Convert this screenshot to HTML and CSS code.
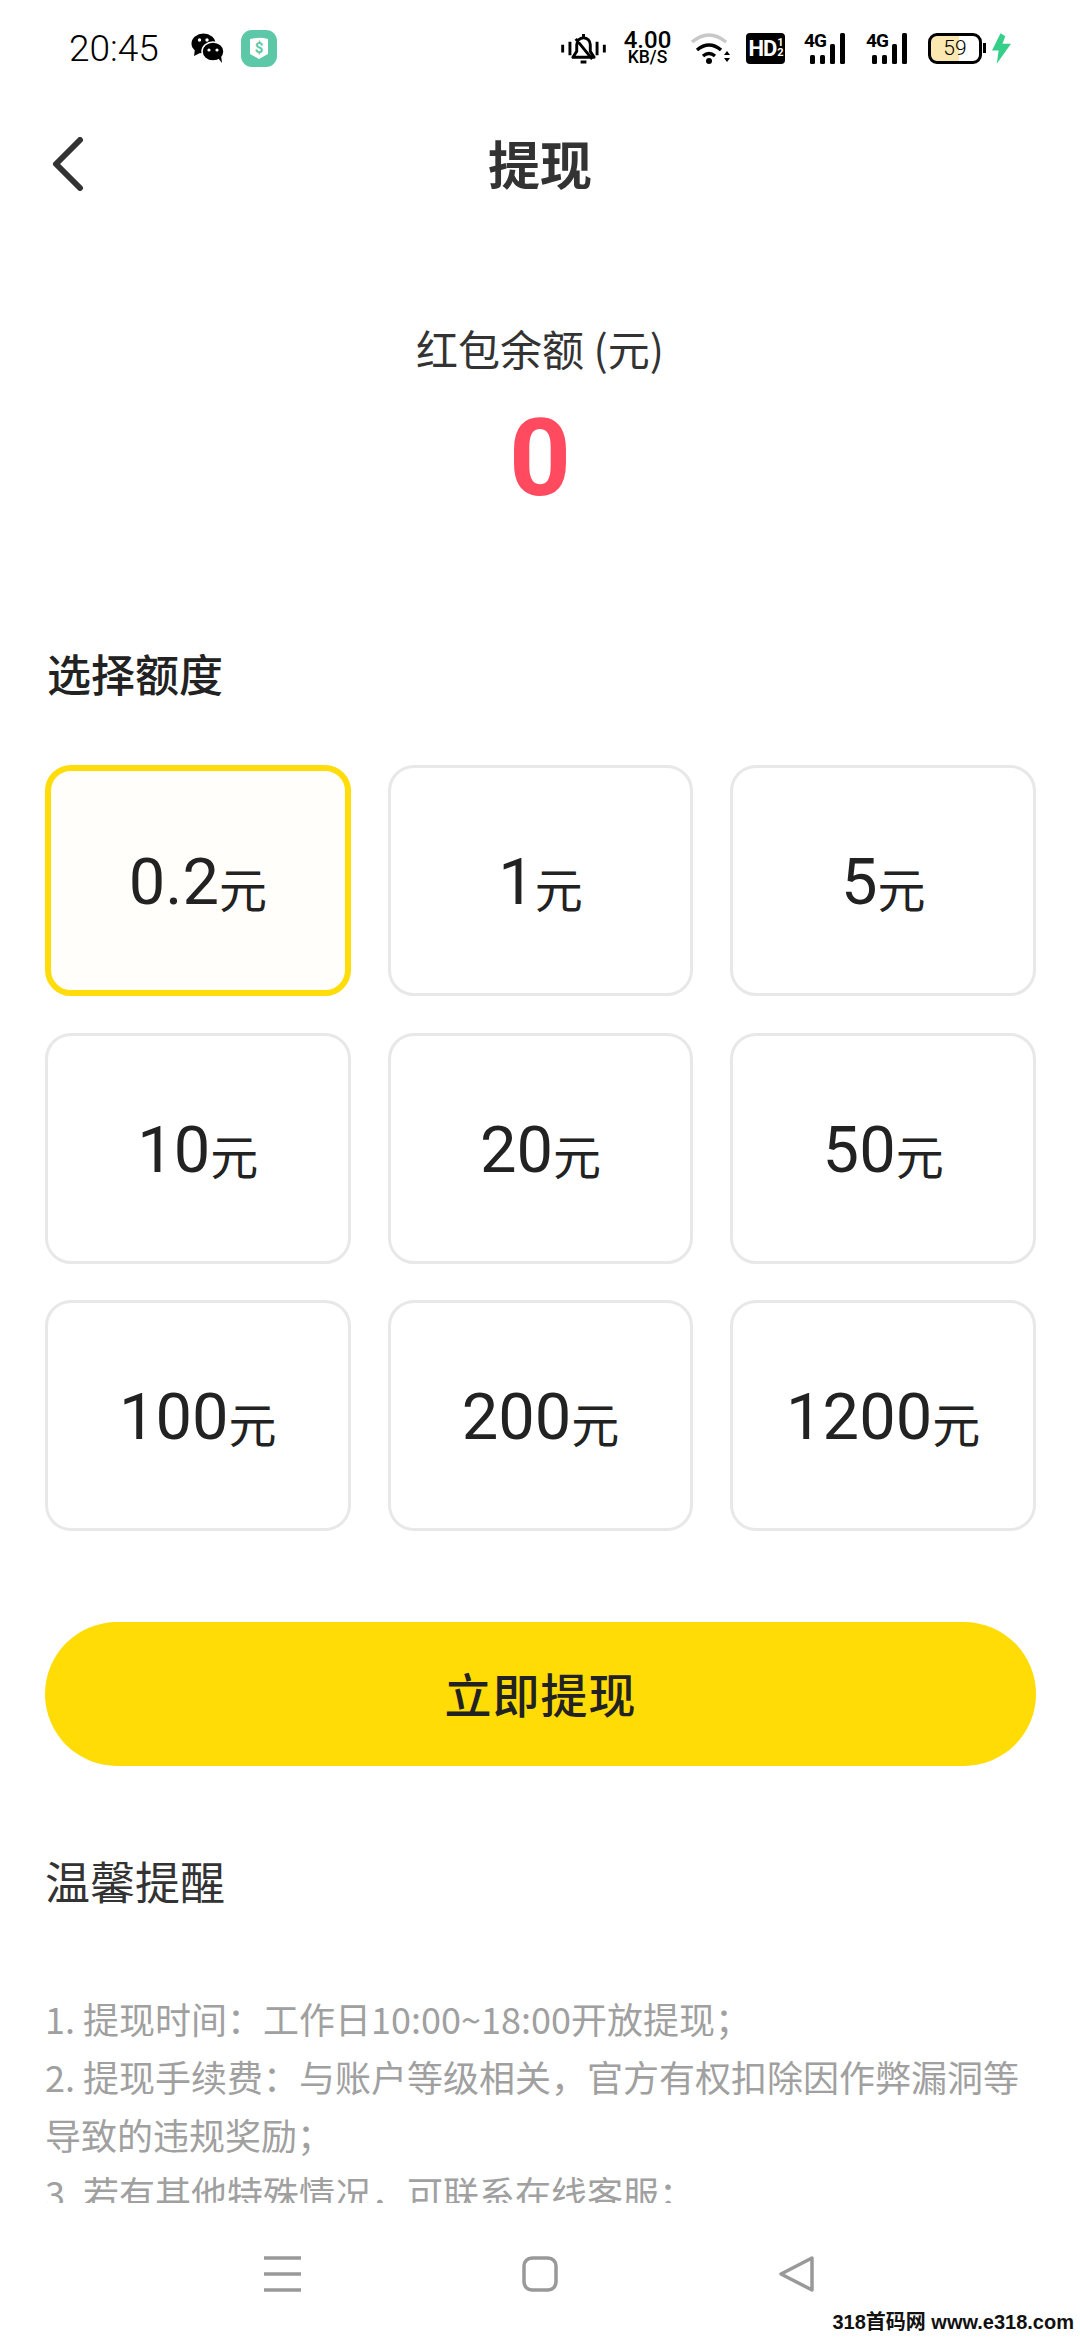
FILE: index.html
```html
<!DOCTYPE html>
<html lang="zh">
<head>
<meta charset="utf-8">
<title>提现</title>
<link rel="stylesheet" href="styles.css">
</head>
<body>
<div class="screen">
  <header class="status">
    <div class="status-left">
      <span class="time">20:45</span>
      <svg class="ic-wechat" viewBox="0 0 33 30"><ellipse cx="12.500" cy="10.500" rx="12" ry="10"/><path d="M4 16l-1 7 8-4z"/><ellipse cx="22" cy="18.500" rx="11" ry="9.500" stroke="#fff" stroke-width="1.500"/><path d="M27 25l4 5-1-8z"/><circle cx="8.500" cy="7" r="1.700" fill="#fff"/><circle cx="16" cy="7" r="1.700" fill="#fff"/><circle cx="18" cy="17" r="1.600" fill="#fff"/><circle cx="26" cy="17" r="1.600" fill="#fff"/></svg>
      <svg class="ic-shield" viewBox="0 0 36 37"><rect width="36" height="37" rx="11" fill="#5cc8a8"/><path d="M9 9q9-2.500 18 0v15l-9 5-9-5z" fill="#fff"/><text x="18" y="23" class="shield-text">$</text></svg>
    </div>
    <div class="status-right">
      <svg class="ic-bell" viewBox="0 0 46 32"><path d="M1.500 12v8M9 9v14M37 9v14M44.500 12v8" stroke="#000" stroke-width="3" fill="none"/><path d="M12 25h22l-4-6v-7a7 7 0 0 0-14 0v7zM15 6l17 21M23 1v3M20 30h6" stroke="#000" stroke-width="3" fill="none" stroke-linejoin="round"/></svg>
      <div class="speed"><span class="speed-num">4.00</span><span class="speed-unit">KB/S</span></div>
      <svg class="ic-wifi" viewBox="0 0 39 31"><path d="M1 9Q18-5 35 9" stroke="#c8c8c8" stroke-width="3.500" fill="none"/><path d="M6 17Q18 7 30 17M12 23Q18 18 24 23" stroke="#000" stroke-width="3.500" fill="none"/><circle cx="18" cy="28" r="3"/><path d="M33 22l3-4 3 4zM33 25l3 4 3-4z"/></svg>
      <div class="hd"><span>HD</span><span class="hd-sub">1<br>2</span></div>
      <div class="signal"><span class="sig-4g">4G</span><i class="b1"></i><i class="b2"></i><i class="b3"></i><i class="b4"></i></div>
      <div class="signal"><span class="sig-4g">4G</span><i class="b1"></i><i class="b2"></i><i class="b3"></i><i class="b4"></i></div>
      <div class="battery"><div class="battery-body"><span class="battery-num">59</span></div><i class="battery-cap"></i></div>
      <svg class="ic-bolt" viewBox="0 0 20 32"><path d="M9 0L0 18h7l-2 14L20 11h-9l3-8z" fill="#35cf8a"/></svg>
    </div>
  </header>

  <nav class="topbar">
    <svg class="ic-back" viewBox="0 0 32 54"><path d="M28 3L4 27l24 24" stroke="#333" stroke-width="6" fill="none" stroke-linecap="round" stroke-linejoin="round"/></svg>
    <h1 class="title">提现</h1>
  </nav>

  <section class="balance">
    <p class="balance-label">红包余额 (元)</p>
    <p class="balance-value">0</p>
  </section>

  <h2 class="section-title">选择额度</h2>

  <div class="grid">
    <div class="card selected"><span class="num">0.2</span><span class="unit">元</span></div>
    <div class="card"><span class="num">1</span><span class="unit">元</span></div>
    <div class="card"><span class="num">5</span><span class="unit">元</span></div>
    <div class="card"><span class="num">10</span><span class="unit">元</span></div>
    <div class="card"><span class="num">20</span><span class="unit">元</span></div>
    <div class="card"><span class="num">50</span><span class="unit">元</span></div>
    <div class="card"><span class="num">100</span><span class="unit">元</span></div>
    <div class="card"><span class="num">200</span><span class="unit">元</span></div>
    <div class="card"><span class="num">1200</span><span class="unit">元</span></div>
  </div>

  <button class="submit">立即提现</button>

  <h3 class="tips-title">温馨提醒</h3>
  <div class="tips">
    <p>1. 提现时间：工作日10:00~18:00开放提现；</p>
    <p>2. 提现手续费：与账户等级相关，官方有权扣除因作弊漏洞等导致的违规奖励；</p>
    <p>3. 若有其他特殊情况，可联系在线客服；</p>
  </div>

  <footer class="navbar">
    <svg class="ic-menu" viewBox="0 0 37 36"><path d="M0 2h37M0 18h37M0 34h37" stroke="#999" stroke-width="3.500" fill="none"/></svg>
    <svg class="ic-home" viewBox="0 0 36 36"><rect x="2" y="2" width="32" height="32" rx="8" stroke="#999" stroke-width="3.500" fill="none"/></svg>
    <svg class="ic-tri" viewBox="0 0 35 36"><path d="M33 2L2 18l31 16z" stroke="#999" stroke-width="3.500" fill="none" stroke-linejoin="round"/></svg>
  </footer>
  <div class="watermark">318首码网 www.e318.com</div>
</div>
</body>
</html>
```
FILE: styles.css
```css
* { box-sizing: border-box; margin: 0; padding: 0; }
html, body { width: 1080px; height: 2340px; background: #fff; overflow: hidden; }
body { font-family: "Noto Sans CJK SC", Roboto, sans-serif; color: #222; }
.screen { position: relative; width: 1080px; height: 2340px; display: flex; flex-direction: column; }

.status { height: 96px; padding: 0 69px 0 69px; display: flex; justify-content: space-between; align-items: center; }
.status-left { display: flex; align-items: center; }
.time { font-family: Roboto, sans-serif; font-size: 37px; font-weight: 300; color: #000; width: 92px; }
.ic-wechat { width: 33px; height: 30px; margin-left: 30px; }
.ic-shield { width: 36px; height: 37px; margin-left: 17px; }
.shield-text { font: 700 15px Roboto, sans-serif; fill: #5cc8a8; text-anchor: middle; }
.status-right { display: flex; align-items: center; }
.ic-bell { width: 45px; height: 31px; }
.speed { display: flex; flex-direction: column; align-items: center; width: 51px; margin-left: 16px; line-height: 1; font-family: Roboto, sans-serif; color: #000; }
.speed-num { font-size: 24px; font-weight: 500; height: 19px; line-height: 19px; }
.speed-unit { font-size: 17.500px; font-weight: 500; height: 15px; line-height: 15px; }
.ic-wifi { width: 39px; height: 31px; margin-left: 18px; }
.hd { width: 39px; height: 31px; margin-left: 16px; background: #000; border-radius: 4px; color: #fff; font: 700 22px/31px "Liberation Sans Narrow", Roboto, sans-serif; display: flex; align-items: center; justify-content: center; letter-spacing: -1px; }
.hd-sub { font-size: 11px; line-height: 10px; margin-left: 1px; }
.signal { position: relative; width: 43px; height: 31px; margin-left: 19px; display: flex; align-items: flex-end; gap: 5px; padding-left: 6px; }
.signal i { display: block; width: 5px; background: #000; border-radius: 1.500px; }
.b1, .b2 { height: 9px; }
.b3 { height: 20px; }
.b4 { height: 31px; }
.sig-4g { position: absolute; left: 0; top: -2px; font: 700 19px/19px Roboto, sans-serif; color: #000; letter-spacing: -1px; }
.battery { display: flex; align-items: center; margin-left: 19px; }
.battery-body { width: 54px; height: 31px; border: 3px solid #000; border-radius: 9px; background: linear-gradient(90deg, #fbe8b0 59%, #fff 59%); display: flex; align-items: center; justify-content: center; }
.battery-num { font: 300 21px/1 Roboto, sans-serif; color: #000; }
.battery-cap { display: block; width: 3px; height: 10px; margin-left: 1px; background: #000; }
.ic-bolt { width: 19px; height: 31px; margin-left: 6px; }

.topbar { position: relative; height: 140px; display: flex; align-items: center; justify-content: center; }
.ic-back { position: absolute; left: 52px; top: 41px; width: 32px; height: 54px; }
.title { font-size: 52px; font-weight: 700; color: #333; line-height: 1; margin-top: -6px; }

.balance { margin-top: 84px; display: flex; flex-direction: column; align-items: center; }
.balance-label { font-size: 42px; line-height: 56px; color: #333; }
.balance-value { font-family: Roboto, sans-serif; font-size: 108px; font-weight: 700; line-height: 100px; color: #ff4a5f; margin-top: 32px; }

.section-title { font-size: 44px; font-weight: 500; line-height: 60px; color: #222; margin: 135px 0 0 47px; }

.grid { margin: 62px 44px 0 45px; display: grid; grid-template-columns: repeat(3, 1fr); grid-auto-rows: 231px; column-gap: 37px; row-gap: 36.500px; }
.card { border: 3px solid #e8e8e8; border-radius: 26px; display: flex; align-items: center; justify-content: center; background: #fff; padding-top: 4px; }
.card.selected { border: 6px solid #ffdc0a; background: #fffefa; }
.num { font-family: Roboto, sans-serif; font-size: 65px; font-weight: 400; color: #222; line-height: 1; }
.unit { font-size: 48px; color: #222; line-height: 1; margin-top: 8px; }

.submit { margin: 91px 44px 0 45px; height: 144px; flex: none; border: 0; border-radius: 72px; background: #ffdc05; color: #222; font-family: inherit; font-size: 47px; font-weight: 500; letter-spacing: 1px; padding-bottom: 3px; }

.tips-title { font-size: 45px; font-weight: 400; line-height: 60px; color: #333; margin: 85px 0 0 45px; }
.tips { margin: 78px 44px 0 45px; height: 214px; flex: none; overflow: hidden; font-size: 36px; line-height: 58px; color: #a0a0a0; }

.navbar { height: 125px; margin-top: 8px; padding-left: 264px; display: flex; gap: 221px; align-items: center; }
.ic-menu { width: 37px; height: 36px; }
.ic-home { width: 36px; height: 36px; }
.ic-tri { width: 35px; height: 36px; }
.watermark { position: absolute; right: 6px; bottom: 6px; font-family: "Liberation Sans", "Noto Sans CJK SC", sans-serif; font-size: 20px; font-weight: 700; line-height: 24px; color: #111; }
```
